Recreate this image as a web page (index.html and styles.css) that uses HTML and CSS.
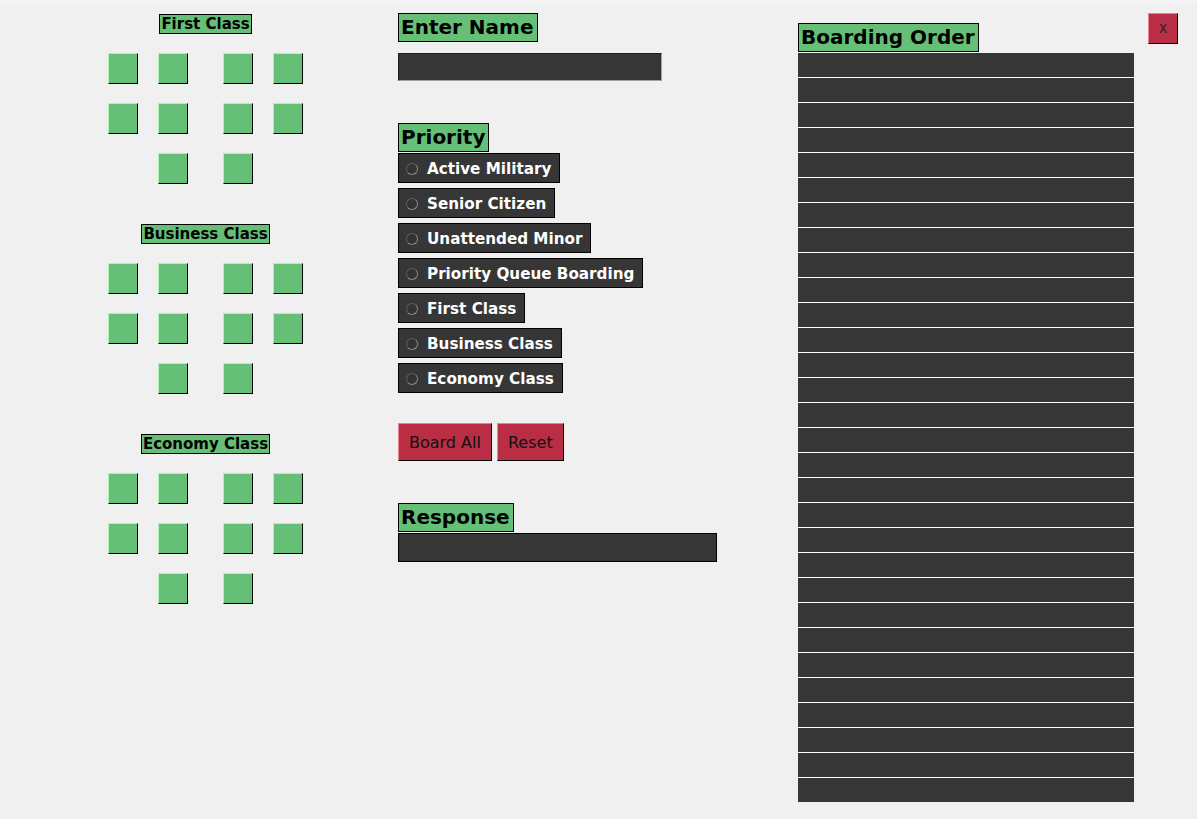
FILE: index.html
```html
<!DOCTYPE html>
<html lang="en">
<head>
<meta charset="utf-8">
<title>Boarding</title>
<link rel="stylesheet" href="styles.css">
</head>
<body>
<div class="topstrip"></div>
<main class="app">
  <section class="cabin">
    <div class="cls">
      <div class="tag">First Class</div>
      <div class="seats">
        <div class="row"><div class="pair"><div class="seat"></div><div class="seat"></div></div><div class="pair"><div class="seat"></div><div class="seat"></div></div></div>
        <div class="row"><div class="pair"><div class="seat"></div><div class="seat"></div></div><div class="pair"><div class="seat"></div><div class="seat"></div></div></div>
        <div class="row"><div class="pair"><div class="seat empty"></div><div class="seat"></div></div><div class="pair"><div class="seat"></div><div class="seat empty"></div></div></div>
      </div>
    </div>
    <div class="cls">
      <div class="tag">Business Class</div>
      <div class="seats">
        <div class="row"><div class="pair"><div class="seat"></div><div class="seat"></div></div><div class="pair"><div class="seat"></div><div class="seat"></div></div></div>
        <div class="row"><div class="pair"><div class="seat"></div><div class="seat"></div></div><div class="pair"><div class="seat"></div><div class="seat"></div></div></div>
        <div class="row"><div class="pair"><div class="seat empty"></div><div class="seat"></div></div><div class="pair"><div class="seat"></div><div class="seat empty"></div></div></div>
      </div>
    </div>
    <div class="cls">
      <div class="tag">Economy Class</div>
      <div class="seats">
        <div class="row"><div class="pair"><div class="seat"></div><div class="seat"></div></div><div class="pair"><div class="seat"></div><div class="seat"></div></div></div>
        <div class="row"><div class="pair"><div class="seat"></div><div class="seat"></div></div><div class="pair"><div class="seat"></div><div class="seat"></div></div></div>
        <div class="row"><div class="pair"><div class="seat empty"></div><div class="seat"></div></div><div class="pair"><div class="seat"></div><div class="seat empty"></div></div></div>
      </div>
    </div>
  </section>

  <section class="controls">
    <div class="heading">Enter Name</div>
    <div class="entry"></div>

    <div class="heading priority-h">Priority</div>
    <div class="radios">
      <label class="radio"><span class="dot"></span>Active Military</label>
      <label class="radio"><span class="dot"></span>Senior Citizen</label>
      <label class="radio"><span class="dot"></span>Unattended Minor</label>
      <label class="radio"><span class="dot"></span>Priority Queue Boarding</label>
      <label class="radio"><span class="dot"></span>First Class</label>
      <label class="radio"><span class="dot"></span>Business Class</label>
      <label class="radio"><span class="dot"></span>Economy Class</label>
    </div>

    <div class="buttons">
      <button class="btn">Board All</button>
      <button class="btn">Reset</button>
    </div>

    <div class="heading response-h">Response</div>
    <div class="response"></div>
  </section>

  <section class="order">
    <div class="heading">Boarding Order</div>
    <div class="list">
      <div class="item"></div><div class="item"></div><div class="item"></div><div class="item"></div><div class="item"></div>
      <div class="item"></div><div class="item"></div><div class="item"></div><div class="item"></div><div class="item"></div>
      <div class="item"></div><div class="item"></div><div class="item"></div><div class="item"></div><div class="item"></div>
      <div class="item"></div><div class="item"></div><div class="item"></div><div class="item"></div><div class="item"></div>
      <div class="item"></div><div class="item"></div><div class="item"></div><div class="item"></div><div class="item"></div>
      <div class="item"></div><div class="item"></div><div class="item"></div><div class="item"></div><div class="item"></div>
    </div>
  </section>

  <button class="close">X</button>
</main>
</body>
</html>
```

FILE: styles.css
```css
* { box-sizing: border-box; }

html, body {
  margin: 0;
  padding: 0;
  background: #f0f0f0;
  font-family: "DejaVu Sans", Verdana, sans-serif;
}

body {
  width: 1197px;
  height: 819px;
  overflow: hidden;
}

.topstrip {
  height: 3px;
  background: #f4f4f4;
}

.app {
  display: flex;
  align-items: flex-start;
}

/* ---------- cabin map ---------- */
.cabin {
  margin-left: 108px;
  width: 195px;
  padding-top: 11px;
  display: flex;
  flex-direction: column;
  gap: 40px;
}

.cls {
  display: flex;
  flex-direction: column;
  align-items: center;
  gap: 19px;
}

.tag {
  background: #66bf77;
  border: 1px solid #000;
  font-weight: bold;
  font-size: 15px;
  line-height: 18px;
  padding: 0 1px;
  color: #000;
  white-space: nowrap;
}

.seats {
  display: flex;
  flex-direction: column;
  gap: 19px;
}

.row {
  display: flex;
  gap: 35px;
}

.pair {
  display: flex;
  gap: 20px;
}

.seat {
  width: 30px;
  height: 31px;
  background: #66bf77;
  border-top: 1px solid #aef2b6;
  border-left: 1px solid #aef2b6;
  border-right: 1px solid #000;
  border-bottom: 1px solid #000;
}

.seat.empty { visibility: hidden; }

/* ---------- controls ---------- */
.controls {
  margin-left: 95px;
  width: 400px;
  padding-top: 10px;
  display: flex;
  flex-direction: column;
  align-items: flex-start;
}

.heading {
  background: #66bf77;
  border: 1px solid #000;
  font-weight: bold;
  font-size: 20px;
  line-height: 27px;
  padding: 0 3px 0 2px;
  color: #000;
  white-space: nowrap;
}

.entry {
  margin-top: 11px;
  width: 264px;
  height: 28px;
  background: #363636;
  border-top: 1px solid #1e1e1e;
  border-left: 1px solid #1e1e1e;
  border-right: 1px solid #a0a0a0;
  border-bottom: 1px solid #a0a0a0;
}

.priority-h { margin-top: 42px; }

.radios {
  margin-top: 1px;
  display: flex;
  flex-direction: column;
  align-items: flex-start;
  gap: 5px;
}

.radio {
  display: flex;
  align-items: center;
  height: 30px;
  background: #363636;
  border: 1px solid #000;
  color: #fff;
  font-weight: bold;
  font-size: 15.2px;
  padding: 1px 8px 0 7px;
  white-space: nowrap;
}

.dot {
  width: 12px;
  height: 12px;
  border-radius: 50%;
  border: 1px solid #5e5e5e;
  border-bottom-color: #8a8a8a;
  border-right-color: #8a8a8a;
  background: #333;
  margin-right: 9px;
  flex: none;
}

.buttons {
  margin-top: 30px;
  display: flex;
  gap: 5px;
}

.btn {
  height: 38px;
  padding: 0 10px;
  background: #b92e45;
  color: #111;
  font-family: "DejaVu Sans", Verdana, sans-serif;
  font-size: 16px;
  border-top: 1px solid #e8838f;
  border-left: 1px solid #e8838f;
  border-right: 1px solid #000;
  border-bottom: 1px solid #000;
  cursor: pointer;
}

.response-h { margin-top: 42px; }

.response {
  margin-top: 1px;
  width: 319px;
  height: 29px;
  background: #363636;
  border: 1px solid #000;
}

/* ---------- boarding order ---------- */
.order {
  margin-top: 20px;
  width: 336px;
  display: flex;
  flex-direction: column;
  align-items: flex-start;
}

.list {
  margin-top: 1px;
  width: 336px;
  display: flex;
  flex-direction: column;
  gap: 1px;
  background: #ffffff;
}

.item {
  height: 24px;
  background: #363636;
}

.close {
  margin-left: 14px;
  margin-top: 10px;
  width: 30px;
  height: 31px;
  padding: 0;
  background: #b92e45;
  color: #222;
  font-family: "DejaVu Sans", Verdana, sans-serif;
  font-size: 12px;
  border-top: 1px solid #e8838f;
  border-left: 1px solid #e8838f;
  border-right: 1px solid #000;
  border-bottom: 1px solid #000;
  cursor: pointer;
}
```
